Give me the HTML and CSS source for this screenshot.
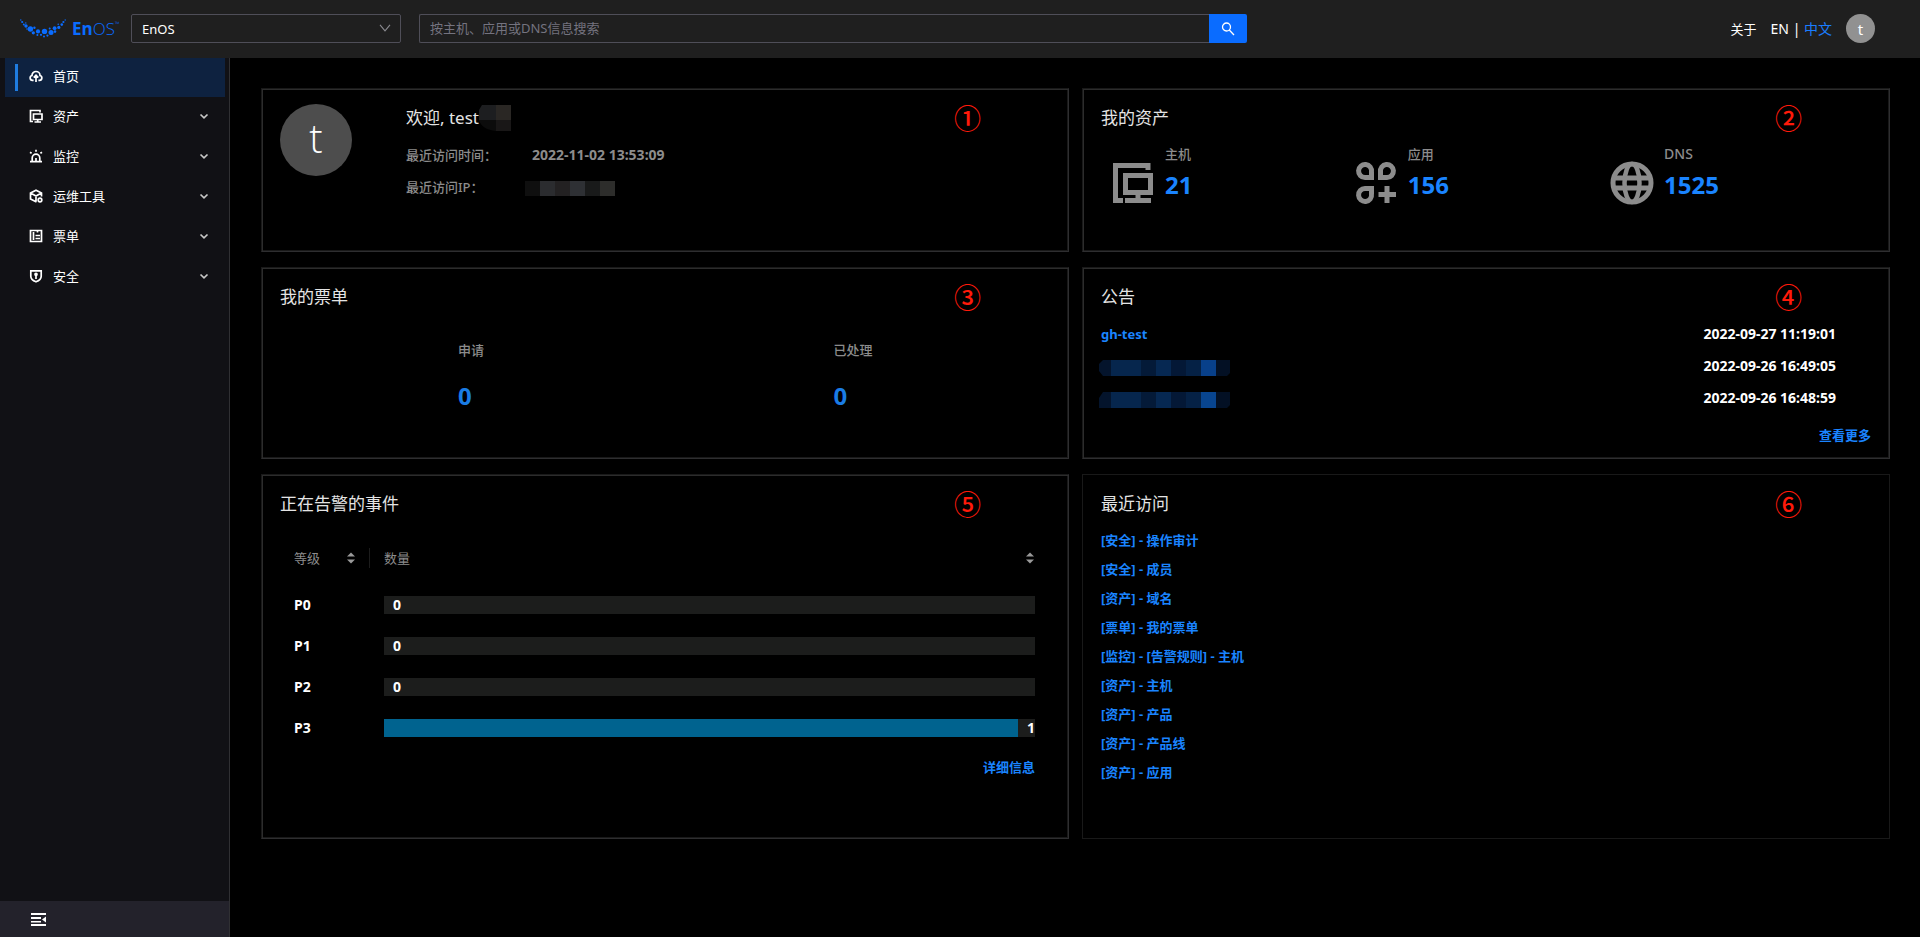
FILE: index.html
```html
<!DOCTYPE html>
<html lang="zh-CN">
<head>
<meta charset="utf-8">
<title>EnOS</title>
<link rel="stylesheet" href="styles.css">
</head>
<body>
<header class="topbar">
  <a class="logo" href="#" aria-label="EnOS">
    <svg class="logo-mark" viewBox="0 0 46 19" width="46" height="19" fill="#0a6cff">
      <circle cx="0.8" cy="1" r=".7"/><circle cx="2.2" cy="3" r="1.1"/><circle cx="3.8" cy="5.4" r="1"/><circle cx="6" cy="7" r="1.7"/><circle cx="5.8" cy="4" r=".7"/><circle cx="10.4" cy="10" r="2.7"/><circle cx="7" cy="10" r=".8"/><circle cx="14.4" cy="8.8" r="1.2"/><circle cx="13.3" cy="13.8" r="1.6"/><circle cx="18" cy="12.4" r="2.1"/><circle cx="17.4" cy="16" r="1"/><circle cx="21" cy="15.8" r="1.1"/><circle cx="24.5" cy="12.4" r="2.7"/><circle cx="24" cy="17.6" r="1"/><circle cx="27.4" cy="16.6" r="1.1"/><circle cx="31" cy="13.4" r="2.5"/><circle cx="29.7" cy="9.5" r="1"/><circle cx="34.6" cy="9.2" r="1.9"/><circle cx="35" cy="12.6" r="1.3"/><circle cx="38.8" cy="8.4" r="1.6"/><circle cx="38.2" cy="5.2" r=".8"/><circle cx="41.8" cy="5.6" r="1.3"/><circle cx="43.4" cy="3" r="1.1"/><circle cx="45.2" cy="1" r=".7"/>
    </svg>
    <span class="logo-text"><b>En</b>OS<sup>™</sup></span>
  </a>
  <div class="org">
    <select aria-label="组织"><option>EnOS</option></select>
    <svg class="org-arrow" viewBox="0 0 12 8" width="12" height="8" fill="none" stroke="#8a8a90" stroke-width="1.1"><path d="M1 .8l5 6 5-6"/></svg>
  </div>
  <form class="search">
    <input type="text" aria-label="搜索" placeholder="按主机、应用或DNS信息搜索">
    <button type="button" aria-label="搜索"><svg viewBox="0 0 14 14" width="14" height="14" fill="none" stroke="#fff" stroke-width="1.3"><circle cx="5.500" cy="5" r="4"/><path d="M8.300 8l4.700 5"/></svg></button>
  </form>
  <nav class="top-links">
    <a class="about" href="#">关于</a>
    <span class="lang"><a href="#">EN</a> | <a class="current" href="#">中文</a></span>
    <button class="user" type="button">t</button>
  </nav>
</header>
<div class="shell">
  <aside class="sidebar">
    <nav class="menu">
      <a class="item active" href="#"><svg viewBox="0 0 14 14" width="14" height="14"><path d="M4.600 11.400H3.400A2.500 2.500 0 0 1 3 6.500a4 4 0 0 1 8 0 2.500 2.500 0 0 1-.4 4.900H9.400M7 13V6.500M4.700 8.600L7 6.300l2.300 2.300"/></svg><span>首页</span></a>
      <a class="item" href="#"><svg viewBox="0 0 14 14" width="14" height="14"><path d="M4 12.500H1.500V1.500h9.500v2M4.500 5h8.500v5.500h-8.500zM8.700 10.500v2M5.500 13h6.500"/></svg><span>资产</span><svg class="chev" viewBox="0 0 10 10" width="10" height="10"><path d="M1.500 3.500L5 6.800l3.500-3.300"/></svg></a>
      <a class="item" href="#"><svg viewBox="0 0 14 14" width="14" height="14"><path d="M1 12.700h12M3.200 12.500V9a3.800 3.800 0 0 1 7.600 0v3.500M7 .8v2M1 3.300l1.600 1M13 3.300l-1.600 1M7 9v3"/></svg><span>监控</span><svg class="chev" viewBox="0 0 10 10" width="10" height="10"><path d="M1.500 3.500L5 6.800l3.500-3.300"/></svg></a>
      <a class="item" href="#"><svg viewBox="0 0 14 14" width="14" height="14"><path d="M7.500 13L1.500 10V4L7 1.200 12.500 4v3.500M1.500 4L7 7l5.500-3M7 7v5.500"/><circle cx="11" cy="11" r="1.800"/></svg><span>运维工具</span><svg class="chev" viewBox="0 0 10 10" width="10" height="10"><path d="M1.500 3.500L5 6.800l3.500-3.300"/></svg></a>
      <a class="item" href="#"><svg viewBox="0 0 14 14" width="14" height="14"><path d="M1.500 1.500h11v11h-11zM4.500 3v8M6.500 6.500H11M6.500 9.500H11M8.500 2v1.500"/></svg><span>票单</span><svg class="chev" viewBox="0 0 10 10" width="10" height="10"><path d="M1.500 3.500L5 6.800l3.500-3.300"/></svg></a>
      <a class="item" href="#"><svg viewBox="0 0 14 14" width="14" height="14"><path d="M1.800 1.800h10.400v5.400c0 2.800-2.700 4.700-5.200 5.600-2.500-.9-5.200-2.800-5.200-5.600zM7 5.500v4.500"/><circle cx="7" cy="5.300" r="1"/></svg><span>安全</span><svg class="chev" viewBox="0 0 10 10" width="10" height="10"><path d="M1.500 3.500L5 6.800l3.500-3.300"/></svg></a>
    </nav>
    <button class="collapse" type="button" aria-label="收起菜单"><svg viewBox="0 0 15 13" width="15" height="13" fill="#fff"><path d="M0 0h15v2H0zM0 4h10v2H0zM0 8h10v1.500H0zM0 11h15v2H0zM15 3.500v6L11 6.500z"/></svg></button>
  </aside>
  <main class="board">
    <section class="card welcome">
      <span class="mark">①</span>
      <div class="avatar">t</div>
      <div class="profile">
        <h2>欢迎, test<svg class="mask-name" viewBox="0 0 32 26" width="32" height="26"><path d="M3 0h14v15H0V5z" fill="#1d1e20"/><path d="M17 0h15v15H17z" fill="#2a2724"/><path d="M0 15h17v11C8 25 2 22 0 15z" fill="#0c0c0c"/><path d="M17 15h15v11H17z" fill="#191717"/></svg></h2>
        <dl>
          <dt>最近访问时间：</dt><dd>2022-11-02 13:53:09</dd>
          <dt>最近访问IP：</dt><dd><svg class="mask-ip" viewBox="0 0 90 15" width="90" height="15"><path fill="#0f0f0f" d="M0 0h15v15H0z"/><path fill="#2b2c2f" d="M15 0h15v15H15z"/><path fill="#232122" d="M30 0h15v15H30z"/><path fill="#2e3034" d="M45 0h15v15H45z"/><path fill="#191a1a" d="M60 0h15v15H60z"/><path fill="#2d2d2b" d="M75 0h15v15H75z"/></svg></dd>
        </dl>
      </div>
    </section>
    <section class="card">
      <span class="mark">②</span>
      <h2>我的资产</h2>
      <div class="assets">
        <div class="asset"><svg viewBox="0 0 44 44" width="44" height="44" fill="none" stroke="#8c8c8c" stroke-width="5"><path d="M12 39.500H4.500V4.500h32.500v4.500"/><path d="M14.500 14.500h25v17h-25zM27 31v8M14 39.500h26"/></svg><div><p>主机</p><strong>21</strong></div></div>
        <div class="asset"><svg viewBox="0 0 44 44" width="44" height="44" fill="none" stroke="#8c8c8c" stroke-width="5"><path d="M17.500 16.500V11a6.500 6.500 0 1 0-6.500 5.500zM26.500 16.500V11a6.500 6.500 0 1 1 6.500 5.500zM17.500 27.500V33a6.500 6.500 0 1 1-6.500-5.500zM33 25v17M24.500 33.500h17.500"/></svg><div><p>应用</p><strong>156</strong></div></div>
        <div class="asset"><svg viewBox="0 0 44 44" width="44" height="44" fill="none" stroke="#8c8c8c" stroke-width="5"><circle cx="22" cy="22" r="19"/><ellipse cx="22" cy="22" rx="7.500" ry="19" stroke-width="4.500"/><path d="M3 17h38M3 27h38"/></svg><div><p class="latin">DNS</p><strong>1525</strong></div></div>
      </div>
    </section>
    <section class="card">
      <span class="mark">③</span>
      <h2>我的票单</h2>
      <div class="tickets">
        <div><p>申请</p><strong>0</strong></div>
        <div><p>已处理</p><strong>0</strong></div>
      </div>
    </section>
    <section class="card">
      <span class="mark">④</span>
      <h2>公告</h2>
      <ul class="notices">
        <li><a href="#">gh-test</a><time>2022-09-27 11:19:01</time></li>
        <li><svg class="mask-note" viewBox="0 0 131 16" width="131" height="16"><path fill="#04142c" d="M4 0h8v16H4L0 11V4z"/><path fill="#06264d" d="M12 0h30v16H12z"/><path fill="#041a38" d="M42 0h15v16H42z"/><path fill="#062852" d="M57 0h15v16H57z"/><path fill="#041836" d="M72 0h15v16H72z"/><path fill="#052145" d="M87 0h15v16H87z"/><path fill="#08408a" d="M102 0h15v16h-15z"/><path fill="#031024" d="M117 0h14v13l-3 3h-11z"/></svg><time>2022-09-26 16:49:05</time></li>
        <li><svg class="mask-note" viewBox="0 0 131 16" width="131" height="16"><path fill="#04142c" d="M4 0h8v16H0V6z"/><path fill="#06264d" d="M12 0h30v16H12z"/><path fill="#041a38" d="M42 0h15v16H42z"/><path fill="#062852" d="M57 0h15v16H57z"/><path fill="#041836" d="M72 0h15v16H72z"/><path fill="#052145" d="M87 0h15v16H87z"/><path fill="#084590" d="M102 0h15v16h-15z"/><path fill="#031024" d="M117 0h14v13l-3 3h-11z"/></svg><time>2022-09-26 16:48:59</time></li>
      </ul>
      <a class="more" href="#">查看更多</a>
    </section>
    <section class="card">
      <span class="mark">⑤</span>
      <h2>正在告警的事件</h2>
      <div class="alerts">
        <table>
          <thead><tr>
            <th class="level"><div>等级<svg viewBox="0 0 8 12" width="8" height="12" fill="#9a9a9a"><path d="M4 .5L8 4.500H0zM4 11.500L0 7.500h8z"/></svg></div></th>
            <th><div>数量<svg viewBox="0 0 8 12" width="8" height="12" fill="#9a9a9a"><path d="M4 .5L8 4.500H0zM4 11.500L0 7.500h8z"/></svg></div></th>
          </tr></thead>
          <tbody>
            <tr><td>P0</td><td><div class="bar"><span class="fill" style="width:0%"></span><span>0</span></div></td></tr>
            <tr><td>P1</td><td><div class="bar"><span class="fill" style="width:0%"></span><span>0</span></div></td></tr>
            <tr><td>P2</td><td><div class="bar"><span class="fill" style="width:0%"></span><span>0</span></div></td></tr>
            <tr><td>P3</td><td><div class="bar"><span class="fill" style="width:100%"></span><span>1</span></div></td></tr>
          </tbody>
        </table>
        <a class="more" href="#">详细信息</a>
      </div>
    </section>
    <section class="card plain">
      <span class="mark">⑥</span>
      <h2>最近访问</h2>
      <ul class="recent">
        <li><a href="#">[安全] - 操作审计</a></li>
        <li><a href="#">[安全] - 成员</a></li>
        <li><a href="#">[资产] - 域名</a></li>
        <li><a href="#">[票单] - 我的票单</a></li>
        <li><a href="#">[监控] - [告警规则] - 主机</a></li>
        <li><a href="#">[资产] - 主机</a></li>
        <li><a href="#">[资产] - 产品</a></li>
        <li><a href="#">[资产] - 产品线</a></li>
        <li><a href="#">[资产] - 应用</a></li>
      </ul>
    </section>
  </main>
</div>
</body>
</html>
```
FILE: styles.css
```css
* { box-sizing: border-box; }
body {
  margin: 0;
  min-height: 100vh;
  display: flex;
  flex-direction: column;
  background: #000;
  color: #fff;
  font: 13px/20px "Noto Sans", "Noto Sans CJK SC", sans-serif;
}
h2, p, dl, dd, ul { margin: 0; padding: 0; }
ul { list-style: none; }
a { color: inherit; text-decoration: none; }
button, input, select { font: inherit; color: inherit; border: 0; padding: 0; }
svg { display: block; flex: none; }

.topbar {
  display: flex;
  align-items: center;
  height: 58px;
  padding: 0 45px 1px 20px;
  background: #1f1f1f;
}
.logo { display: flex; align-items: center; gap: 6px; width: 111px; color: #0a6cff; }
.logo-text { display: flex; font: 300 17px/20px "Open Sans", sans-serif; }
.logo-text b { font-weight: 700; }
.logo-text sup { font-size: 6px; line-height: 10px; }
.org { position: relative; width: 270px; margin-right: 18px; }
.org select {
  display: block;
  width: 100%;
  height: 29px;
  padding: 0 10px;
  appearance: none;
  background: transparent;
  border: 1px solid #4f4e58;
  border-radius: 2px;
}
.org-arrow { position: absolute; right: 10px; top: 10px; pointer-events: none; }
.search { display: flex; flex: 0 1 828px; height: 29px; }
.search input {
  flex: 1;
  min-width: 0;
  padding: 0 10px 1px;
  background: transparent;
  border: 1px solid #4f4e58;
  border-right: 0;
  border-radius: 2px 0 0 2px;
}
.search input::placeholder { color: #74737f; opacity: 1; }
.search button {
  width: 38px;
  display: grid;
  place-items: center;
  background: #0a6cff;
  border-radius: 0 2px 2px 0;
}
.top-links { display: flex; align-items: center; gap: 14px; margin-left: auto; }
.lang { font-size: 14px; }
.lang .current { color: #1a7dff; }
.user { width: 29px; height: 29px; border-radius: 50%; background: #919191; font-size: 15px; }

.shell { display: flex; flex: 1; }
.sidebar {
  display: flex;
  flex-direction: column;
  width: 230px;
  background: #111115;
  border-right: 1px solid #303033;
}
.menu { flex: 1; padding: 0 4px 0 5px; }
.item {
  display: flex;
  align-items: center;
  height: 40px;
  padding: 0 16px 3px 24px;
}
.item.active {
  position: relative;
  height: 39px;
  background: #0e2240;
}
.item.active::before {
  content: "";
  position: absolute;
  left: 10px;
  top: 6px;
  width: 3px;
  height: 27px;
  background: #1f7ce0;
}
.item svg { fill: none; stroke: #fff; stroke-width: 1.7; }
.item span { margin-left: 10px; }
.item .chev { margin-left: auto; stroke: #c8c8c8; stroke-width: 1.7; }
.collapse { height: 36px; padding-left: 31px; background: #23222b; }

.board {
  flex: 1;
  min-width: 0;
  display: grid;
  grid-template-columns: minmax(0, 1fr) minmax(0, 1fr);
  grid-auto-rows: max-content;
  gap: 15px 13px;
  padding: 30px 30px 30px 31px;
}
.card {
  position: relative;
  padding: 17px 18px 13px;
  border: 1px solid;
  border-color: #191919 #2e2e30 #2e2e30 #191919;
  box-shadow: inset 1px 1px #2c2c2c, inset -1px -1px #191919;
}
.card.plain { border-color: #191919; box-shadow: none; }
.card h2 { font-size: 17px; font-weight: 400; line-height: 24px; color: #e4e4e4; }
.mark {
  position: absolute;
  right: 87px;
  top: 15px;
  color: #ff1a0a;
  font: 500 27px/27px "Noto Sans CJK SC", sans-serif;
}
.welcome { display: flex; gap: 54px; min-height: 164px; padding-top: 15px; }
.avatar {
  width: 72px;
  height: 72px;
  border-radius: 50%;
  background: #4d4d4d;
  text-align: center;
  font: 300 40px/68px "Open Sans", sans-serif;
}
.profile { padding-top: 1px; }
.profile h2 { display: flex; align-items: center; }
.profile dl {
  display: grid;
  grid-template-columns: 126px auto;
  gap: 12px 0;
  padding-top: 14px;
  color: #8c8c8c;
}
.profile dt { font-weight: 500; }
.profile dd { font-weight: 700; font-size: 14px; }
.mask-ip { margin: 4px 0 0 -7px; }

.assets { display: flex; justify-content: space-between; padding: 14px 152px 0 10px; }
.asset { display: flex; gap: 10px; }
.asset svg { margin-top: 17px; }
.asset p, .tickets p { color: #8c8c8c; font-weight: 500; }
.asset .latin { font-size: 14px; }
.asset strong, .tickets strong { display: block; font-size: 24px; line-height: 32px; color: #1a84ff; }
.asset strong { margin-top: 5px; }

.tickets { display: grid; grid-template-columns: 1fr 1fr; justify-items: center; padding: 31px 6px 20px 0; }
.tickets strong { margin-top: 20px; color: #1a7ce4; }

.notices { padding: 9px 35px 11px 0; font-weight: 700; }
.notices li { display: flex; align-items: center; justify-content: space-between; height: 32px; }
.notices time { font-size: 14px; }
.notices a, .more, .recent a { color: #1a84ff; }
.notices .mask-note { margin: 3px 0 0 -2px; }
.more { display: block; text-align: right; font-weight: 700; }

.alerts { padding: 28px 15px 48px 14px; }
.alerts table { width: 100%; border-collapse: collapse; }
.alerts th, .alerts td { padding: 0; text-align: left; }
.alerts th { padding-bottom: 12px; color: #8c8c8c; font-weight: 400; height: 40px; }
.alerts th div { display: flex; align-items: center; justify-content: space-between; padding-right: 1px; }
.alerts .level { width: 90px; padding-right: 14px; }
.alerts .level div { padding-right: 14px; border-right: 1px solid #1c1c1c; }
.alerts td { height: 41px; font-weight: 700; font-size: 14px; }
.alerts .more { margin-top: 9px; }
.bar { display: flex; height: 18px; background: #1c1d1c; line-height: 18px; }
.bar .fill { background: #00638f; }
.bar span:last-child { padding-left: 9px; }
.recent { padding-top: 10px; font-weight: 700; line-height: 29px; }
```
